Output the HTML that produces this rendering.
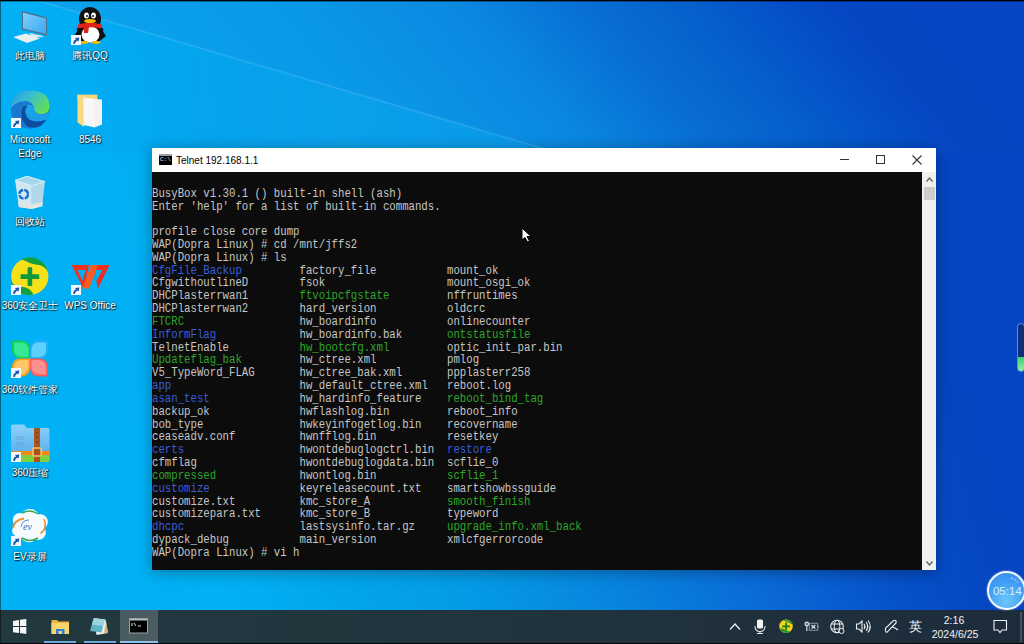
<!DOCTYPE html>
<html><head><meta charset="utf-8">
<style>
*{margin:0;padding:0;box-sizing:border-box}
html,body{width:1024px;height:644px;overflow:hidden;background:#000}
body{position:relative;font-family:"Liberation Sans",sans-serif}
.a{position:absolute}
#wall{position:absolute;left:0;top:1px;width:1024px;height:643px;overflow:hidden;background:#0a90e0}
#taskbar{position:absolute;left:0;top:610px;width:1024px;height:34px;background:linear-gradient(90deg,#22383f 0%,#21343d 50%,#1d2c3b 100%)}
#win{position:absolute;left:152px;top:148px;width:784px;height:422px;background:#fff;box-shadow:0 2px 14px rgba(0,0,0,.33)}
#title{position:absolute;left:0;top:0;width:784px;height:24px;background:#fff}
#term{position:absolute;left:0;top:24px;width:770px;height:398px;background:#0c0c0c;overflow:hidden}
#sb{position:absolute;left:770px;top:24px;width:14px;height:398px;background:#f0f0f0}
pre{position:absolute;left:0px;top:15.7px;font-family:"Liberation Mono",monospace;font-size:12.5px;line-height:12.83px;color:#c6c6c6;transform:scaleX(0.855);transform-origin:0 0;white-space:pre}
.b{color:#3b5bd8}.g{color:#2ea52a}
.lbl{position:absolute;color:#fff;font-size:10px;text-align:center;text-shadow:1px 1px 1px rgba(0,0,0,.85),0 0 2px rgba(0,0,0,.7);line-height:13.5px;white-space:nowrap}
</style></head><body>
<div id="wall">
 <div class="a" style="left:0;top:0;width:1024px;height:643px;background:linear-gradient(75deg,#00b2f6 0%,#02b0f4 20%,#02a6ea 29.5%,#0598e4 42%,#0880dc 54.6%,#0a6cd8 64%,#0650c8 76.5%,#0545c2 85%,#0646c6 100%)"></div>
 <div class="a" style="left:0;top:0;width:1024px;height:643px;clip-path:polygon(0 -11.4px,560px 152.3px,1024px 152.3px,1024px 0,0 0);background:linear-gradient(50deg,#0aa6ee 0%,#0aa2ec 40%,#0a98e8 53%,#0a88e0 63.8%,#086ed4 71.8%,#0560cc 78.2%,#054ec8 84.6%,#0546c3 88%,#0544c2 100%)"></div>
 <div class="a" style="left:0;top:0;width:1024px;height:643px;clip-path:polygon(0 -11.4px,560px 152.3px,0 152.3px);background:linear-gradient(90deg,rgba(4,170,242,0) 0px,rgba(4,166,240,.6) 150px,#0aa0ea 350px,#0a98e8 545px)"></div>
 <div class="a" style="left:0;top:-13px;width:620px;height:3px;transform-origin:0 0;transform:rotate(16.3deg);background:linear-gradient(180deg,rgba(170,225,255,0) 0,rgba(170,225,255,.2) 1.5px,rgba(170,225,255,0) 3px)"></div>
</div>
<!-- desktop icons -->
<svg class="a" style="left:0;top:0" width="130" height="600" viewBox="0 0 130 600">
 <defs>
  <linearGradient id="scr" x1="0" y1="0" x2="1" y2="1"><stop offset="0" stop-color="#7fd0ff"/><stop offset="1" stop-color="#3aa8f0"/></linearGradient>
  <linearGradient id="edg" x1="0" y1="0" x2="1" y2=".6"><stop offset="0" stop-color="#2a96dc"/><stop offset=".45" stop-color="#36bcd8"/><stop offset="1" stop-color="#62dc58"/></linearGradient>
  <linearGradient id="zip" x1="0" y1="0" x2="0" y2="1"><stop offset="0" stop-color="#8fd0fa"/><stop offset="1" stop-color="#4aa6ea"/></linearGradient>
  <g id="sc"><rect x="0" y="0" width="10" height="10" fill="#f4f8fb"/><path d="M2.3 9 Q2 5.5 5 4.6 L4 3 L8.3 2.4 L7.6 6.6 L6.4 5.5 Q4.2 6.5 3.8 9Z" fill="#1f55a8"/></g>
 </defs>
 <!-- monitor -->
 <path d="M22 11 L47 17.5 L47 35.5 L22 29.5Z" fill="#4b6f88"/>
 <path d="M23 12.5 L46 18.5 L46 34 L23 28.5Z" fill="url(#scr)"/>
 <path d="M29 33 L41 35.5 L44 37 L33 37.5Z" fill="#dfe6ea"/>
 <path d="M13 37 L26 33.5 L40 38.5 L27 43Z" fill="#e9eef0"/>
 <!-- QQ -->
 <ellipse cx="90" cy="19" rx="11" ry="12" fill="#111"/>
 <path d="M77 28 Q76 36 80 41 L100 41 Q104 36 103 28 Q90 22 77 28Z" fill="#111"/>
 <path d="M74 36 Q78 30 80 28 L79 40Z" fill="#111"/><path d="M106 36 Q102 30 100 28 L101 40Z" fill="#111"/>
 <ellipse cx="90.5" cy="34.5" rx="9" ry="8" fill="#fff"/>
 <path d="M78 24.5 Q90 21 102 24.5 L102 28.5 Q90 26 78 28.5Z" fill="#e2231a"/>
 <path d="M84 27 L89 27 L88 33 L84 33Z" fill="#e2231a"/>
 <ellipse cx="86.5" cy="15.5" rx="2.4" ry="3" fill="#fff"/><ellipse cx="93.5" cy="15.5" rx="2.4" ry="3" fill="#fff"/>
 <circle cx="87" cy="16" r="1" fill="#111"/><circle cx="93" cy="16" r="1" fill="#111"/>
 <ellipse cx="90" cy="21" rx="6" ry="2" fill="#f5b800"/>
 <ellipse cx="84" cy="42.5" rx="4.5" ry="1.4" fill="#f5b800"/><ellipse cx="96" cy="42.5" rx="4.5" ry="1.4" fill="#f5b800"/>
 <use href="#sc" x="71" y="35"/>
 <!-- Edge -->
 <path d="M30.2 90.2 A19.3 19.3 0 0 1 49.5 109.5 L49.5 112 Q48 117 45 120 Q40 127 30 128.8 A19.3 19.3 0 0 1 10.9 109.5 A19.3 19.3 0 0 1 30.2 90.2Z" fill="#1a78d0"/>
 <path d="M10.9 108 Q12 90.2 30.2 90.2 Q49.5 90.5 49.5 107 Q49.5 114.2 41 114.2 Q34.5 114 34 109 Q33 101.5 26 101 Q16 101 10.9 108Z" fill="url(#edg)"/>
 <path d="M34 109.5 Q35 114.2 41 114.2 Q48 114 49.5 110.5 Q48.5 116 46.5 119.5 Q40 122.5 34 121.2 Q28 120 26 116Z" fill="#1a9ee8"/>
 <ellipse cx="29.5" cy="110" rx="5" ry="5.2" fill="#1aa2ea"/>
 <path d="M23 106.5 Q20.5 112 22 118.5 Q24.5 127 33 127.8 Q41.5 128 46.5 119.5 Q40 122.5 34 121.2 Q27 120 25.5 114 Q24.5 109.5 27.5 105.8 Q25 105.5 23 106.5Z" fill="#0d4c9e"/>
 <use href="#sc" x="11" y="118"/>
 <!-- folder 8546 -->
 <path d="M77.5 94.6 L97.4 94.6 L97.4 101 L77.5 101Z" fill="#f7d67a"/>
 <path d="M77.5 94.6 L84 97.5 L84 127 L77.5 122.5Z" fill="#f8da80"/>
 <path d="M83.5 97.5 L95 99 L95 127.5 L83.5 125Z" fill="#f7f7f5"/>
 <path d="M94.5 99 L102 99.5 L102 124.5 L94.5 127.5Z" fill="#f1f1ef"/>
 <!-- recycle bin -->
 <path d="M15.1 180.3 L31.9 185.8 L31.9 209 L18.9 207Z" fill="#cfe8f2"/>
 <path d="M31.9 185.8 L44.9 181.6 L42.2 206.3 L31.9 209Z" fill="#b0d6e8"/>
 <path d="M15.1 180.3 L27.1 176.2 L44.9 181.6 L31.9 185.8Z" fill="#a6d6ee"/>
 <path d="M15.1 180.3 L27.1 176.2 L44.9 181.6 L31.9 185.8Z" fill="none" stroke="#e6f6fc" stroke-width="0.9"/>
 <path d="M18 202 L31.9 204.5 L43 202 L42.2 206.3 L31.9 209 L18.9 207Z" fill="#e4e6e2"/>
 <circle cx="23.7" cy="194.3" r="4.3" fill="none" stroke="#1a6fd0" stroke-width="2.4" stroke-dasharray="5.5 1.3"/>
 <!-- 360 safe -->
 <circle cx="29.8" cy="276.4" r="18.6" fill="#f5e01a"/>
 <path d="M22 259 Q30 256.5 38 259.5 Q46 264 48 272 Q44 265 37 264.5 Q30 264 22 259Z" fill="#12a040"/>
 <path d="M21 259.5 A18.6 18.6 0 0 1 47.5 270 Q45 265.5 40 265 Q33 264.5 28 261.5 Q25 260 21 259.5Z" fill="#12a040"/>
 <path d="M11.5 282 Q15 287 22 287 Q28 287 32 292 Q35 294.8 30 295 A18.6 18.6 0 0 1 11.5 282Z" fill="#12a040"/>
 <path d="M27.6 267.3 h4.6 v7 h7 v4.6 h-7 v7 h-4.6 v-7 h-7 v-4.6 h7z" fill="#10983c"/>
 <use href="#sc" x="11" y="285"/>
 <!-- WPS -->
 <path d="M71.5 265 L89 265 L83.5 288.5 Z M77.5 270 L85.5 270 L82.5 281 Z" fill="#f2301e" fill-rule="evenodd"/>
 <path d="M93 265 L109.5 265 L98 288.5 Z M93.5 270 L102.5 270 L96 281.5 Z" fill="#f22c1e" fill-rule="evenodd"/>
 <path d="M91 265 L98 265 L89 288.5 L82.5 288.5 Z" fill="#ff5a1a"/>
 <use href="#sc" x="71" y="285"/>
 <!-- 360 soft manager -->
 <path d="M30 358.5 L30 349.5 Q30 340.5 21 340.5 L12 340.5 L12 349.5 Q12 358.5 21 358.5 Z" fill="#10cc5a"/><path d="M28.5 357 L28.5 350.475 Q28.5 342.5 21.25 342.5 L14 342.5 L14 349.75 Q14 357 21.25 357 Z" fill="#34e894"/><path d="M30 358.5 L30 349.5 Q30 340.5 39 340.5 L48 340.5 L48 349.5 Q48 358.5 39 358.5 Z" fill="#20b0f8"/><path d="M31.5 357 L31.5 350.475 Q31.5 342.5 38.75 342.5 L46 342.5 L46 349.75 Q46 357 38.75 357 Z" fill="#5cd0ff"/><path d="M30 358.5 L30 367.5 Q30 376.5 21 376.5 L12 376.5 L12 367.5 Q12 358.5 21 358.5 Z" fill="#f5a012"/><path d="M28.5 360 L28.5 366.525 Q28.5 374.5 21.25 374.5 L14 374.5 L14 367.25 Q14 360 21.25 360 Z" fill="#ffc56a"/><path d="M30 358.5 L30 367.5 Q30 376.5 39 376.5 L48 376.5 L48 367.5 Q48 358.5 39 358.5 Z" fill="#ff5a5a"/><path d="M31.5 360 L31.5 366.525 Q31.5 374.5 38.75 374.5 L46 374.5 L46 367.25 Q46 360 38.75 360 Z" fill="#ff9090"/>
 <use href="#sc" x="11" y="368"/>
 <!-- 360 zip -->
 <path d="M13 424.5 L24 424.5 L27 428 L47.5 428 Q49.5 428 49.5 430 L49.5 460 Q49.5 462 47.5 462 L13 462 Q11 462 11 460 L11 426.5 Q11 424.5 13 424.5Z" fill="url(#zip)"/>
 <rect x="11" y="451" width="38.5" height="4" fill="#f08a12"/>
 <path d="M11 455 L49.5 455 L49.5 460 Q49.5 462 47.5 462 L13 462 Q11 462 11 460Z" fill="#7ed040"/>
 <text x="15" y="440" font-family="Liberation Sans" font-size="5.5" fill="#6aa0d8">360</text>
 <text x="15.5" y="446" font-family="Liberation Sans" font-size="5.5" fill="#6aa0d8">ZIP</text>
 <rect x="34" y="428" width="6" height="34" fill="#a8561e"/>
 <circle cx="37" cy="433" r=".7" fill="#5a2a08"/><circle cx="37" cy="437.5" r=".7" fill="#5a2a08"/><circle cx="37" cy="442" r=".7" fill="#5a2a08"/>
 <rect x="32.8" y="448" width="8.6" height="8" rx="1.5" fill="none" stroke="#f7c46a" stroke-width="1.4"/>
 <use href="#sc" x="11" y="452"/>
 <!-- EV -->
 <path d="M30 509 Q36 509 38.5 514.5 Q45 513.5 47.5 519.5 Q49 525 44.5 528 Q47.5 533 44 537.5 Q40.5 541 35 539.5 Q32.5 543 28 542 Q22.5 541.5 21 537 Q15 537.5 12.5 533 Q11 528.5 15 525.5 Q11 521 14 516 Q17 512 22 513.5 Q24.5 509 30 509Z" fill="#f6fbfd"/>
 <path d="M13 528 Q14 520 24 518.5" stroke="#e8922e" stroke-width="1.8" fill="none"/>
 <path d="M40.5 533.5 Q48 528 44 519" stroke="#e8922e" stroke-width="1.6" fill="none"/>
 <path d="M22 538 Q30 543 38 538" stroke="#3aa84a" stroke-width="1.6" fill="none"/>
 <path d="M22.5 513 Q30 508.5 38 514" stroke="#3aa84a" stroke-width="1.5" fill="none"/>
 <path d="M21 527 Q22 520 29 520" stroke="#2a6cc8" stroke-width="0.8" fill="none"/>
 <text x="23" y="530" font-family="Liberation Serif" font-style="italic" font-size="10" fill="#2a6cc8">ev</text>
 <use href="#sc" x="11" y="536"/>
</svg>
<div class="lbl" style="left:0px;top:49px;width:60px">此电脑</div>
<div class="lbl" style="left:60px;top:49px;width:60px">腾讯QQ</div>
<div class="lbl" style="left:0px;top:133px;width:60px">Microsoft<br>Edge</div>
<div class="lbl" style="left:60px;top:133px;width:60px">8546</div>
<div class="lbl" style="left:0px;top:215px;width:60px">回收站</div>
<div class="lbl" style="left:0px;top:299px;width:60px">360安全卫士</div>
<div class="lbl" style="left:60px;top:299px;width:60px">WPS Office</div>
<div class="lbl" style="left:0px;top:383px;width:60px">360软件管家</div>
<div class="lbl" style="left:0px;top:466px;width:60px">360压缩</div>
<div class="lbl" style="left:0px;top:550px;width:60px">EV录屏</div>
<div id="win">
 <div id="title">
  <div class="a" style="left:7px;top:6px;width:13px;height:11px;background:#000;border-top:2px solid #a0a0a0"><div class="a" style="left:1px;top:0px;font-size:6px;line-height:8px;color:#e8e8e8;font-family:Liberation Mono">C:\</div></div>
  <div class="a" style="left:24px;top:7px;font-size:10px;color:#000;line-height:12px">Telnet 192.168.1.1</div>
  <div class="a" style="left:688px;top:11px;width:9px;height:1px;background:#333"></div>
  <div class="a" style="left:724px;top:7px;width:9px;height:9px;border:1px solid #333"></div>
  <svg class="a" style="left:760px;top:7px" width="10" height="10"><path d="M0.5 0.5L9.5 9.5M9.5 0.5L0.5 9.5" stroke="#333" stroke-width="1.1"/></svg>
 </div>
 <div id="term"><pre>BusyBox v1.30.1 () built-in shell (ash)
Enter 'help' for a list of built-in commands.

profile close core dump
WAP(Dopra Linux) # cd /mnt/jffs2
WAP(Dopra Linux) # ls
<span class="b">CfgFile_Backup</span>         factory_file           mount_ok
CfgwithoutlineD        fsok                   mount_osgi_ok
DHCPlasterrwan1        <span class="g">ftvoipcfgstate</span>         nffruntimes
DHCPlasterrwan2        hard_version           oldcrc
<span class="g">FTCRC</span>                  hw_boardinfo           onlinecounter
<span class="b">InformFlag</span>             hw_boardinfo.bak       <span class="g">ontstatusfile</span>
TelnetEnable           <span class="g">hw_bootcfg.xml</span>         optic_init_par.bin
<span class="g">Updateflag_bak</span>         hw_ctree.xml           pmlog
V5_TypeWord_FLAG       hw_ctree_bak.xml       ppplasterr258
<span class="b">app</span>                    hw_default_ctree.xml   reboot.log
<span class="b">asan_test</span>              hw_hardinfo_feature    <span class="g">reboot_bind_tag</span>
backup_ok              hwflashlog.bin         reboot_info
bob_type               hwkeyinfogetlog.bin    recovername
ceaseadv.conf          hwnfflog.bin           resetkey
<span class="b">certs</span>                  hwontdebuglogctrl.bin  <span class="b">restore</span>
cfmflag                hwontdebuglogdata.bin  scflie_0
<span class="g">compressed</span>             hwontlog.bin           <span class="g">scflie_1</span>
<span class="b">customize</span>              keyreleasecount.txt    smartshowbssguide
customize.txt          kmc_store_A            <span class="g">smooth_finish</span>
customizepara.txt      kmc_store_B            typeword
<span class="b">dhcpc</span>                  lastsysinfo.tar.gz     <span class="g">upgrade_info.xml_back</span>
dypack_debug           main_version           xmlcfgerrorcode
WAP(Dopra Linux) # vi h</pre></div>
 <div id="sb">
  <svg class="a" style="left:4px;top:5px" width="7" height="5"><path d="M0.5 4.5L3.5 1L6.5 4.5" stroke="#606060" stroke-width="1.3" fill="none"/></svg>
  <div class="a" style="left:2px;top:15px;width:11px;height:13px;background:#cdcdcd"></div>
  <svg class="a" style="left:4px;top:389px" width="7" height="5"><path d="M0.5 0.5L3.5 4L6.5 0.5" stroke="#606060" stroke-width="1.3" fill="none"/></svg>
 </div>
</div>
<div id="taskbar">
 <div class="a" style="left:120px;top:0;width:38px;height:33px;background:#4a5b61"></div>
 <div class="a" style="left:44px;top:31px;width:32px;height:2px;background:#6ea8dc"></div>
 <div class="a" style="left:84px;top:31px;width:32px;height:2px;background:#6ea8dc"></div>
 <div class="a" style="left:120px;top:31px;width:38px;height:2px;background:#8cc2ee"></div>
 <div class="a" style="left:0;top:33px;width:1024px;height:1px;background:#06090b"></div>
 <svg class="a" style="left:0;top:0" width="1024" height="34" viewBox="0 610 1024 34">
  <!-- start -->
  <path d="M13 620.9 L19 620 L19 626 L13 626Z M20 619.8 L26.3 619 L26.3 626 L20 626Z M13 627 L19 627 L19 633 L13 632.2Z M20 627 L26.3 627 L26.3 633.9 L20 633.1Z" fill="#f4f6f7"/>
  <!-- explorer -->
  <path d="M51.5 620 L57 620 L58.5 621.5 L69 621.5 L69 634 L51.5 634Z" fill="#e9b73a"/>
  <rect x="51.5" y="623" width="17.5" height="11" fill="#f8d56a"/>
  <path d="M56 629 L64.5 629 L64.5 634 L62 634 L62 631 L58.5 631 L58.5 634 L56 634Z" fill="#2f7fd0"/>
  <!-- notepad -->
  <path d="M94 618 L105.5 619.5 L108 633 L96.5 635 Z" fill="#e8f2f2"/>
  <path d="M106 621 L108 633 L104 633.5Z" fill="#d8b070"/>
  <path d="M93.5 618.5 L104.5 620 L101.5 632.5 L90 631 Z" fill="#5fb3c6"/>
  <path d="M93.5 618.5 L104.5 620 L103 626 L92 624.5 Z" fill="#9ad4e0"/>
  <!-- console -->
  <rect x="129.5" y="618.5" width="18" height="14.5" fill="#000" stroke="#9aa0a2" stroke-width="1"/>
  <rect x="130" y="619" width="17" height="1.5" fill="#b8bcbe"/>
  <path d="M132 623 L132 626 M134 623 L136 626 M138 626 L141 626" stroke="#ddd" stroke-width="1"/>
  <!-- tray -->
  <path d="M730 629.5 L735 624 L740 629.5" stroke="#e8ecee" stroke-width="1.3" fill="none"/>
  <rect x="757" y="619.5" width="6" height="9" rx="1.5" fill="#f2f4f5"/>
  <path d="M755 626 Q755 631.5 760 631.5 Q765 631.5 765 626 M760 631.5 L760 633.5 M757 633.5 L763 633.5" stroke="#e0e4e6" stroke-width="1.1" fill="none"/>
  <circle cx="786" cy="626.3" r="6.8" fill="#f2d21a"/>
  <path d="M783 620.3 Q788 619 791.5 622 Q792.5 623.5 792.8 625 Q789 622.5 783 620.3Z" fill="#2a9a2a"/>
  <path d="M779.6 628 Q784 628.5 787 630.5 Q790 632 791 631 Q788 633.5 784 632.8 Q780.5 631 779.6 628Z" fill="#2a9a2a"/>
  <path d="M785.2 622.5 h1.8 v3 h3 v1.8 h-3 v3 h-1.8 v-3 h-3 v-1.8 h3z" fill="#1f7f1f"/>
  <circle cx="806.8" cy="624" r="1.8" fill="#5a6570" stroke="#dde2e6" stroke-width="1.2"/>
  <path d="M806.8 626 L806.8 631" stroke="#c8cdd2" stroke-width="1.3"/>
  <rect x="809.3" y="623.3" width="8.3" height="7" fill="none" stroke="#8a949c" stroke-width="1"/>
  <path d="M817.6 625.5 L818.4 625.5 L818.4 628 L817.6 628" stroke="#8a949c" stroke-width="0.8" fill="none"/>
  <path d="M811.5 625 L815.3 628.5 M815.3 625 L811.5 628.5" stroke="#e8ecee" stroke-width="1.1"/>
  <circle cx="837" cy="626.5" r="6.3" fill="none" stroke="#eef0f2" stroke-width="1.1"/>
  <ellipse cx="837" cy="626.5" rx="2.8" ry="6.3" fill="none" stroke="#eef0f2" stroke-width="1"/>
  <path d="M831 624 L843 624 M831 629 L843 629" stroke="#eef0f2" stroke-width="1"/>
  <circle cx="841.5" cy="631" r="2.5" fill="#1e2a36" stroke="#eef0f2" stroke-width="1"/>
  <path d="M856.5 624 L859 624 L862 621 L862 632 L859 629 L856.5 629Z" fill="none" stroke="#eef0f2" stroke-width="1.1"/>
  <path d="M864 624 Q866 626.5 864 629 M866 622 Q869.5 626.5 866 631 M868 620.5 Q872.5 626.5 868 632.5" stroke="#eef0f2" stroke-width="1.1" fill="none"/>
  <path d="M886 632 Q884 628 888 626 L893 621 Q895 619.5 896 621 Q897 623 894 625 L889 630 Q887 633 886 632Z M892 627 Q896 628 898 630" stroke="#eef0f2" stroke-width="1.1" fill="none"/>
  <path d="M994 620.5 L1006.5 620.5 L1006.5 630 L1002 630 L1000 632.5 L998 630 L994 630Z" fill="none" stroke="#eef0f2" stroke-width="1.1"/>
  <path d="M1021 612 L1021 642" stroke="#6b7880" stroke-width="1"/>
 </svg>
 <div class="a" style="left:908.5px;top:9.5px;font-size:13px;color:#f0f2f4;line-height:14px">英</div>
 <div class="a" style="left:934px;top:4px;width:40px;text-align:center;font-size:10.5px;color:#f0f2f4;line-height:12px">2:16</div>
 <div class="a" style="left:929px;top:18px;width:52px;text-align:center;font-size:10.5px;color:#f0f2f4;line-height:12px">2024/6/25</div>
</div>
<!-- timer bubble -->
<div class="a" style="left:987px;top:571px;width:39px;height:39px;border-radius:50%;border:2px solid #f4fbff;background:radial-gradient(circle at 50% 80%,#6cc6fa 0%,#3f9cf2 60%,#3a8cee 100%);box-shadow:0 0 2px rgba(255,255,255,.6)"></div>
<div class="a" style="left:993px;top:585px;width:34px;font-size:11.6px;color:#d6efff;line-height:12px;letter-spacing:-0.1px">05:14</div>
<svg class="a" style="left:1010px;top:577px" width="12" height="10"><path d="M1 1 Q6 2 9 7" stroke="#cfe8ff" stroke-width="1" fill="none" stroke-dasharray="2 1.5"/></svg>
<!-- right edge volume widget -->
<div class="a" style="left:1017px;top:323px;width:8px;height:49px;border-radius:4px;border:1px solid #5f86d8;background:linear-gradient(180deg,#0f2f7a 0%,#0f2f7a 70%,#3fd070 70%,#8ef0a8 100%)"></div>
<!-- mouse cursor -->
<svg class="a" style="left:521px;top:226.5px" width="12" height="16" viewBox="0 0 12 16"><path d="M1 1 L1 13 L4 10.5 L6.5 15 L8.5 14 L6 9.5 L10 9.5Z" fill="#fff" stroke="#000" stroke-width="1"/></svg>
<div class="a" style="left:0;top:0;width:1px;height:644px;background:rgba(0,0,0,.45)"></div>
<div class="a" style="left:0;top:1px;width:1024px;height:1px;background:rgba(0,0,0,.35)"></div>
</body></html>
